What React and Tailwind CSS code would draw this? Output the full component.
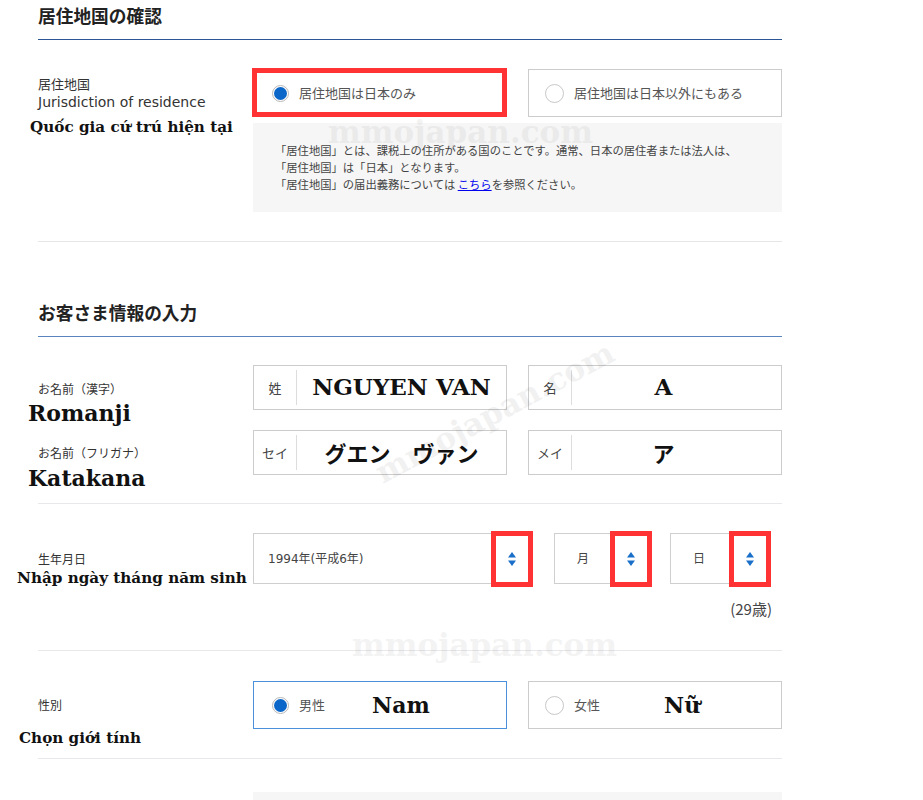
import React from "react";

const jp = { fontFamily: '"DejaVu Sans", "Noto Sans CJK JP", sans-serif' };
const cjk = { fontFamily: '"Noto Sans CJK JP", sans-serif' };
const serif = { fontFamily: '"DejaVu Serif", serif' };

function Radio({ checked }) {
  if (checked) {
    return (
      <span className="flex h-[17px] w-[17px] shrink-0 items-center justify-center rounded-full border border-[#b8b8b8] bg-white">
        <span className="h-[13px] w-[13px] rounded-full bg-[#0a66c8]" />
      </span>
    );
  }
  return <span className="h-[19px] w-[19px] shrink-0 rounded-full border border-[#c8c8c8] bg-white" />;
}

function Arrows() {
  return (
    <svg width="8" height="14" viewBox="0 0 8 14">
      <polygon points="4,0 8,5.5 0,5.5" fill="#1a6fc9" />
      <polygon points="0,8.5 8,8.5 4,14" fill="#1a6fc9" />
    </svg>
  );
}

function Select({ width, text, textLeft }) {
  return (
    <div className={`relative flex h-[51px] items-center border border-[#cfcfcf] bg-white ${width}`}>
      <span className={`text-[12px] text-[#444] ${textLeft}`} style={jp}>{text}</span>
      <div className="absolute right-[-1px] top-[-3px] flex h-[56px] w-[42px] items-center justify-center border-[5px] border-[#ff3333]">
        <Arrows />
      </div>
    </div>
  );
}

function NameBox({ prefix, value, valueClass, valueStyle, shift = "" }) {
  return (
    <div className="flex h-[45px] items-stretch border border-[#cccccc] bg-white">
      <div className="flex w-[42px] shrink-0 items-center justify-center text-[13px] text-[#444]" style={cjk}>
        {prefix}
      </div>
      <div className="my-[4px] w-px bg-[#dddddd]" />
      <div className={`flex flex-1 items-center justify-center ${shift}`}>
        <span className={valueClass} style={valueStyle}>{value}</span>
      </div>
    </div>
  );
}

export default function App() {
  return (
    <div className="relative h-[800px] w-[923px] overflow-hidden bg-white text-[#333]" style={jp}>
      <div className="ml-[38px] w-[744px]">
        {/* Heading 1 */}
        <div className="border-b border-[#2b5595] pb-[12px] pt-[3px]">
          <h2 className="text-[17.7px] font-bold leading-[24px] text-[#222]" style={cjk}>居住地国の確認</h2>
        </div>

        {/* Row: residence */}
        <div className="flex border-b border-[#e6e6e6] pb-[29px] pt-[29px]">
          <div className="w-[215px] shrink-0 pt-[5px]">
            <div className="text-[13px] leading-[19px] text-[#333]" style={cjk}>居住地国</div>
            <div className="text-[14px] leading-[19px] text-[#333]">Jurisdiction of residence</div>
            <div className="ml-[-8px] mt-[3px] whitespace-nowrap text-[15.2px] font-bold leading-[24px] text-[#111]" style={serif}>
              Quốc gia cứ trú hiện tại
            </div>
          </div>
          <div className="w-[529px]">
            <div className="grid grid-cols-2 gap-[21px]">
              <div className="relative flex h-[48px] items-center border border-[#cccccc] bg-white pl-[18px]">
                <Radio checked />
                <span className="ml-[10px] text-[13px] text-[#555]" style={cjk}>居住地国は日本のみ</span>
                <div className="absolute bottom-[-1px] left-[-2px] right-[-1px] top-[-2px] border-[5px] border-[#ff3333]" />
              </div>
              <div className="flex h-[48px] items-center border border-[#cccccc] bg-white pl-[16px]">
                <Radio />
                <span className="ml-[10px] text-[13px] text-[#555]" style={cjk}>居住地国は日本以外にもある</span>
              </div>
            </div>
            <div className="mt-[6px] h-[89px] bg-[#f6f6f6] pl-[22px] pt-[19px] text-[11.3px] leading-[17px] text-[#444]" style={cjk}>
              <div>「居住地国」とは、課税上の住所がある国のことです。通常、日本の居住者または法人は、</div>
              <div>「居住地国」は「日本」となります。</div>
              <div>
                「居住地国」の届出義務については <a className="text-[#0000ee] underline">こちら</a>を参照ください。
              </div>
            </div>
          </div>
        </div>

        {/* Heading 2 */}
        <div className="mt-[58px] border-b border-[#5a84bd] pb-[12px]">
          <h2 className="text-[17.7px] font-bold leading-[24px] text-[#222]" style={cjk}>お客さま情報の入力</h2>
        </div>

        {/* Names */}
        <div className="border-b border-[#e8e8ec] pb-[28px] pt-[28px]">
          <div className="flex">
            <div className="h-[45px] w-[215px] shrink-0 pt-[15px]">
              <div className="text-[12px] leading-[18px] text-[#333]" style={cjk}>お名前（漢字）</div>
              <div className="ml-[-10px] mt-[2px] whitespace-nowrap text-[22px] font-bold leading-[26px] text-[#111]" style={serif}>Romanji</div>
            </div>
            <div className="grid w-[529px] grid-cols-2 gap-[21px]">
              <NameBox prefix="姓" value="NGUYEN VAN" valueClass="text-[23px] font-bold text-[#111]" valueStyle={serif} />
              <NameBox prefix="名" value="A" valueClass="text-[23px] font-bold text-[#111]" valueStyle={serif} shift="pr-[26px]" />
            </div>
          </div>
          <div className="mt-[20px] flex">
            <div className="h-[45px] w-[215px] shrink-0 pt-[14px]">
              <div className="text-[12px] leading-[18px] text-[#333]" style={cjk}>お名前（フリガナ）</div>
              <div className="ml-[-10px] mt-[3px] whitespace-nowrap text-[22px] font-bold leading-[26px] text-[#111]" style={serif}>Katakana</div>
            </div>
            <div className="grid w-[529px] grid-cols-2 gap-[21px]">
              <NameBox prefix="セイ" value="グエン　ヴァン" valueClass="text-[22px] font-bold text-[#111]" valueStyle={cjk} />
              <NameBox prefix="メイ" value="ア" valueClass="text-[22px] font-bold text-[#111]" valueStyle={cjk} shift="pr-[26px]" />
            </div>
          </div>
        </div>

        {/* Birthday */}
        <div className="border-b border-[#e8e8ec] pb-[31px] pt-[29px]">
          <div className="flex">
            <div className="h-[51px] w-[215px] shrink-0 pt-[17px]">
              <div className="text-[12px] leading-[18px] text-[#333]" style={cjk}>生年月日</div>
              <div className="ml-[-21px] mt-[-1px] whitespace-nowrap text-[15.2px] font-bold leading-[22px] text-[#111]" style={serif}>
                Nhập ngày tháng năm sinh
              </div>
            </div>
            <div className="flex w-[529px]">
              <Select width="w-[280px]" text="1994年(平成6年)" textLeft="ml-[14px]" />
              <div className="ml-[21px]">
                <Select width="w-[98px]" text="月" textLeft="ml-[22px]" />
              </div>
              <div className="ml-[18px]">
                <Select width="w-[101px]" text="日" textLeft="ml-[22px]" />
              </div>
            </div>
          </div>
          <div className="mt-[15px] flex w-[734px] justify-end text-[15px] leading-[20px] text-[#444]" style={cjk}>
            (29歳)
          </div>
        </div>

        {/* Gender */}
        <div className="flex border-b border-[#e8e8ec] pb-[29px] pt-[30px]">
          <div className="h-[48px] w-[215px] shrink-0 pt-[15px]">
            <div className="text-[12px] leading-[18px] text-[#333]" style={cjk}>性別</div>
            <div className="ml-[-19px] mt-[13px] whitespace-nowrap text-[15.2px] font-bold leading-[22px] text-[#111]" style={serif}>
              Chọn giới tính
            </div>
          </div>
          <div className="grid w-[529px] grid-cols-2 gap-[21px]">
            <div className="flex h-[48px] items-center border border-[#4a90da] bg-white pl-[18px]">
              <Radio checked />
              <span className="ml-[10px] text-[13px] text-[#555]" style={cjk}>男性</span>
              <span className="ml-[47px] text-[22px] font-bold text-[#111]" style={serif}>Nam</span>
            </div>
            <div className="flex h-[48px] items-center border border-[#cccccc] bg-white pl-[16px]">
              <Radio />
              <span className="ml-[10px] text-[13px] text-[#555]" style={cjk}>女性</span>
              <span className="ml-[64px] text-[22px] font-bold text-[#111]" style={serif}>Nữ</span>
            </div>
          </div>
        </div>

        {/* Next block */}
        <div className="ml-[215px] mt-[33px] h-[40px] w-[529px] bg-[#f6f6f6]" />
      </div>

      {/* Watermarks */}
      <div className="pointer-events-none absolute left-[328px] top-[112px] whitespace-nowrap text-[31px] font-bold leading-[40px] text-black opacity-[0.045]" style={serif}>
        mmojapan.com
      </div>
      <div
        className="pointer-events-none absolute left-[362px] top-[392px] origin-center whitespace-nowrap text-[31px] font-bold leading-[40px] text-black opacity-[0.05]"
        style={{ ...serif, transform: "rotate(-28deg)" }}
      >
        mmojapan.com
      </div>
      <div className="pointer-events-none absolute left-[352px] top-[625px] whitespace-nowrap text-[31px] font-bold leading-[40px] text-black opacity-[0.045]" style={serif}>
        mmojapan.com
      </div>
    </div>
  );
}
